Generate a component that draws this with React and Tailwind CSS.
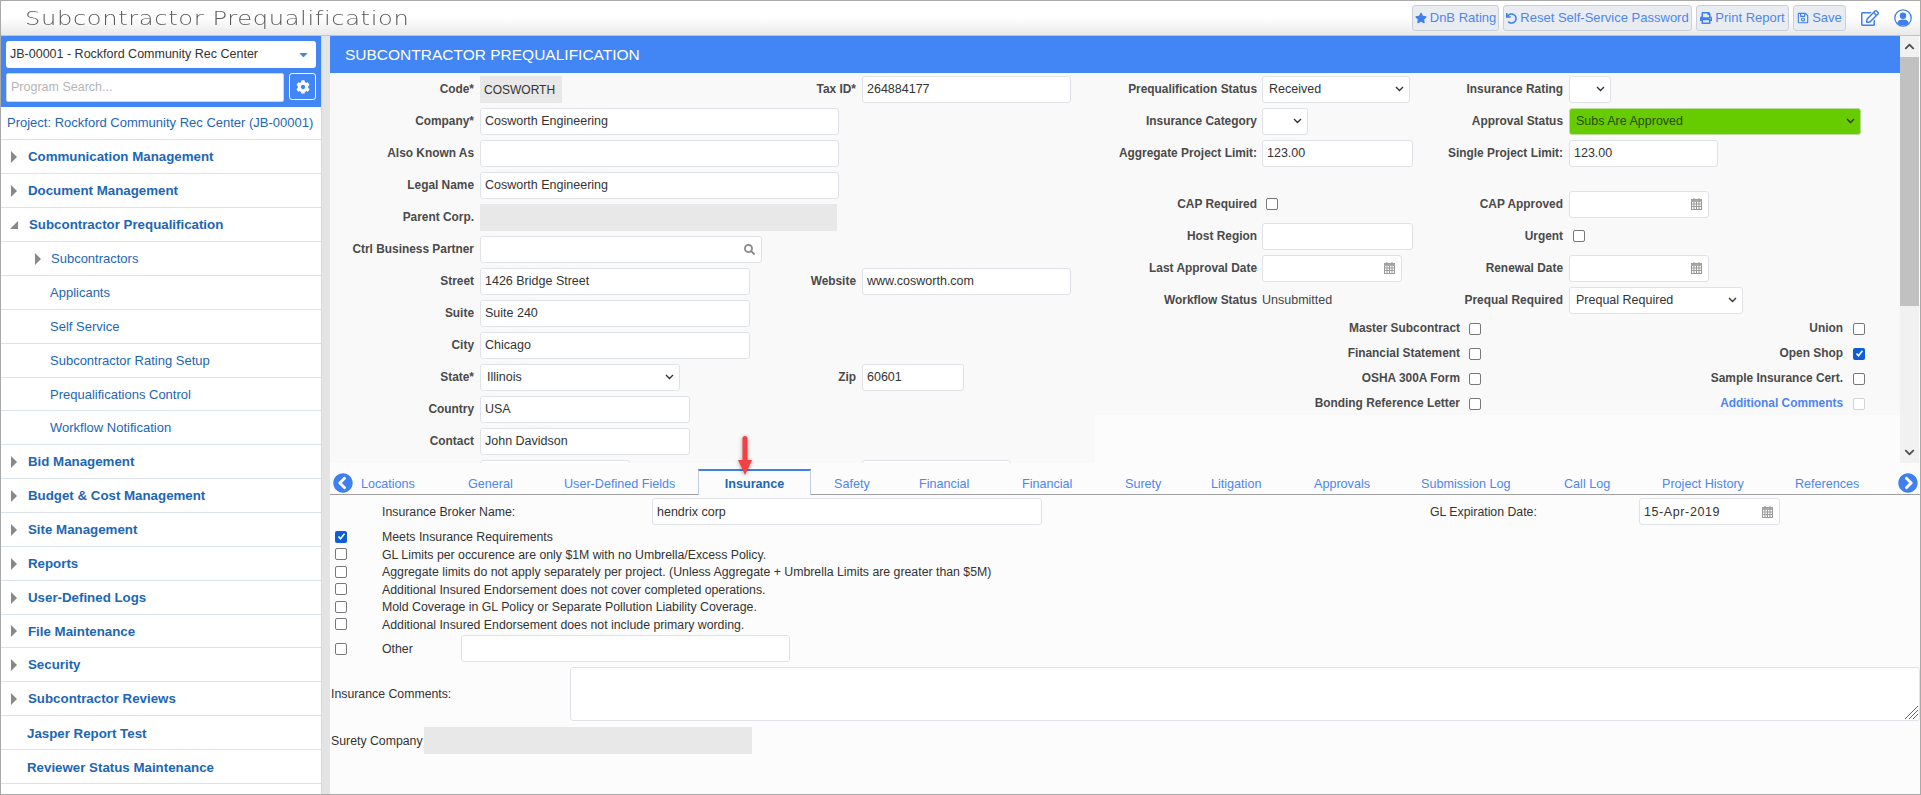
import React from "react";
import {
  FaStar, FaUndo, FaPrint, FaRegSave, FaRegEdit, FaCog, FaSearch,
  FaChevronCircleLeft, FaChevronCircleRight, FaChevronUp, FaChevronDown, FaCaretDown,
} from "react-icons/fa";

const FONT = "font-['Liberation_Sans',Arial,sans-serif]";

const subItems = [
  { label: "Applicants" },
  { label: "Self Service" },
  { label: "Subcontractor Rating Setup" },
  { label: "Prequalifications Control", h: "h-[33px]" },
  { label: "Workflow Notification" },
];
const menuBottom = [
  { label: "Bid Management" },
  { label: "Budget & Cost Management" },
  { label: "Site Management" },
  { label: "Reports" },
  { label: "User-Defined Logs" },
  { label: "File Maintenance", h: "h-[33px]" },
  { label: "Security" },
  { label: "Subcontractor Reviews" },
];

const tabs = [
  ["Locations", "w-[107px]"], ["General", "w-[96px]"], ["User-Defined Fields", "w-[134px]"], ["Insurance", ""],
  ["Safety", "w-[85px] ml-[23px]"], ["Financial", "w-[103px]"], ["Financial", "w-[103px]"], ["Surety", "w-[86px]"],
  ["Litigation", "w-[103px]"], ["Approvals", "w-[107px]"], ["Submission Log", "w-[143px]"], ["Call Log", "w-[98px]"],
  ["Project History", "w-[133px]"], ["References", "w-[90px]"],
];

const checks = [
  ["Meets Insurance Requirements", true],
  ["GL Limits per occurence are only $1M with no Umbrella/Excess Policy.", false],
  ["Aggregate limits do not apply separately per project. (Unless Aggregate + Umbrella Limits are greater than $5M)", false],
  ["Additional Insured Endorsement does not cover completed operations.", false],
  ["Mold Coverage in GL Policy or Separate Pollution Liability Coverage.", false],
  ["Additional Insured Endorsement does not include primary wording.", false],
];

const RightTri = () => (
  <svg width="6" height="12" viewBox="0 0 6 12" className="shrink-0"><path d="M0 0 L6 6 L0 12 Z" fill="#888" /></svg>
);
const OpenTri = () => (
  <svg width="8" height="8" viewBox="0 0 8 8" className="shrink-0"><path d="M8 0 V8 H0 Z" fill="#888" /></svg>
);

const Calendar = () => (
  <svg width="11" height="12" viewBox="0 0 11 12" className="shrink-0">
    <rect x="0.5" y="1.5" width="10" height="10" fill="#fff" stroke="#999" />
    <rect x="0.5" y="1.5" width="10" height="2.5" fill="#aaa" />
    <path d="M3 0v3M8 0v3M0 6h11M0 8.500h11M3 4v7M5.500 4v7M8 4v7" stroke="#999" strokeWidth="1" fill="none" />
  </svg>
);

const UserIcon = () => (
  <svg width="18" height="18" viewBox="0 0 18 18" className="ml-[11px]">
    <circle cx="9" cy="9" r="8.200" fill="#fff" stroke="#3f7ff0" strokeWidth="1.300" />
    <circle cx="9" cy="6.800" r="3.300" fill="#3f7ff0" />
    <path d="M3.200 14.200 C3.600 11.600 6 10.600 9 10.600 C12 10.600 14.400 11.600 14.800 14.200 C13.400 15.700 11.400 16.400 9 16.400 C6.600 16.400 4.600 15.700 3.200 14.200 Z" fill="#3f7ff0" />
  </svg>
);

const Check = ({ on, faded }) =>
  on ? (
    <span className="w-3 h-3 rounded-[2px] bg-[#0b5ed7] flex items-center justify-center shrink-0">
      <svg width="9" height="9" viewBox="0 0 9 9"><path d="M1.500 4.500 L3.500 6.800 L7.500 1.800" stroke="#fff" strokeWidth="1.600" fill="none" /></svg>
    </span>
  ) : (
    <span className={`block w-3 h-3 rounded-[2px] border bg-white shrink-0 ${faded ? "border-[#d5d5d8]" : "border-[#77777c]"}`} />
  );

const Input = ({ w, value, icon, mono }) => (
  <div className={`${w} h-[27px] bg-white border border-[#dfe3e8] rounded-[3px] flex items-center pl-[4px] pr-[6px] text-[12.500px] text-[#333] shrink-0 justify-between ${mono ? "tracking-[0.6px]" : ""}`}>
    <span className="pt-[1px]">{value}</span>
    {icon}
  </div>
);

const Select = ({ w, value, green }) => (
  <div className={`${w} h-[27px] border rounded-[3px] flex items-center pl-[6px] pr-[5px] text-[12.500px] shrink-0 justify-between ${green ? "bg-[#66cc00] border-[#b9dd98] text-[#2a4a08]" : "bg-white border-[#dfe3e8] text-[#333]"}`}>
    <span className="pt-[1px]">{value}</span>
    <svg width="9" height="6" viewBox="0 0 9 6"><path d="M1 1 L4.500 4.500 L8 1" stroke="#333" strokeWidth="1.400" fill="none" /></svg>
  </div>
);

const Disabled = ({ w }) => <div className={`${w} h-[27px] bg-[#e8e8e8] shrink-0`} />;

const Label = ({ w, children }) => (
  <div className={`${w} pt-[1px] text-right font-bold text-[11.900px] text-[#4a4a4a] shrink-0 whitespace-nowrap`}>{children}</div>
);

const Row = ({ label, field, right, rightField }) => (
  <div className="flex items-center h-8">
    <Label w="w-[144px]">{label}</Label>
    <div className="ml-[6px] w-[376px] flex items-center justify-between shrink-0">
      {field}
      {right && <Label w="">{right}</Label>}
    </div>
    {rightField && <div className="ml-[6px]">{rightField}</div>}
  </div>
);

const RRow = ({ label, field, right, rightField }) => (
  <div className="flex items-center h-8">
    <Label w="w-[162px]">{label}</Label>
    <div className="ml-[5px] w-[301px] flex items-center justify-between shrink-0">
      {field}
      {right && <Label w="ml-auto">{right}</Label>}
    </div>
    {rightField && <div className="ml-[6px] flex items-center">{rightField}</div>}
  </div>
);

const CRow = ({ left, leftOn, right, rightOn, link }) => (
  <div className="flex items-center h-[25px]">
    <Label w="w-[365px]">{left}</Label>
    <div className="ml-[9px]"><Check on={leftOn} /></div>
    <div className={`w-[362px] pt-[1px] text-right font-bold text-[11.900px] shrink-0 ${link ? "text-[#4d86f0]" : "text-[#4a4a4a]"}`}>{right}</div>
    <div className="ml-[10px]"><Check on={rightOn} faded={link} /></div>
  </div>
);

const MenuRow = ({ children, indent = "pl-[10px]", bold = true, icon, h = "h-[34px]" }) => (
  <div className={`${h} border-b border-[#dde3ea] flex items-center ${indent} text-[#1d66b5] ${bold ? "font-bold text-[13.300px]" : "text-[13px]"}`}>
    {icon}
    <span className="pt-[1px]">{children}</span>
  </div>
);

const ToolButton = ({ w, icon, children }) => (
  <button className={`${w} h-[26px] bg-[#e9edf1] border border-[#c9d0d8] rounded-[3px] flex items-center justify-center gap-[3px]`}>
    {icon}
    {children}
  </button>
);

export default function App() {
  return (
    <div className={`${FONT} w-[1921px] h-[795px] overflow-hidden bg-[#fcfcfc] border-t border-b border-l border-r border-[#a9a9a9] flex flex-col`}>
      {/* top bar */}
      <header className="h-[35px] shrink-0 bg-gradient-to-b from-white via-white to-[#e9e9e9] border-b border-[#c4c4c4] flex items-center pl-[24px] pr-[8px]">
        <h1 className="font-['DejaVu_Sans',sans-serif] font-extralight text-[20px] tracking-[0.5px] text-[#5c5c5c] origin-left scale-x-[1.21]">Subcontractor Prequalification</h1>
        <div className="ml-auto flex items-center gap-[4px] text-[13px] text-[#4d86f0]">
          <ToolButton w="w-[87px]" icon={<FaStar size={12} className="text-[#3f7ff0]" />}>DnB Rating</ToolButton>
          <ToolButton w="w-[189px]" icon={<FaUndo size={11} className="text-[#3f7ff0]" />}>Reset Self-Service Password</ToolButton>
          <ToolButton w="w-[93px]" icon={<FaPrint size={12} className="text-[#3f7ff0]" />}>Print Report</ToolButton>
          <ToolButton w="w-[53px]" icon={<FaRegSave size={12} className="text-[#3f7ff0]" />}>Save</ToolButton>
          <FaRegEdit size={18} className="ml-[11px] text-[#3f7ff0]" />
          <UserIcon />
        </div>
      </header>

      <div className="flex flex-1 min-h-0">
        {/* sidebar */}
        <aside className="w-[320px] shrink-0 bg-white">
          <div className="h-[71px] bg-[#4285f4] px-[5px] pt-[5px]">
            <div className="h-[27px] bg-white rounded-[3px] w-[310px] flex items-center justify-between pl-[4px] pr-[6px] text-[12.500px] text-[#333]">
              <span>JB-00001 - Rockford Community Rec Center</span>
              <FaCaretDown size={13} className="text-[#4285f4]" />
            </div>
            <div className="flex items-start gap-[5px] mt-[5px] w-[310px]">
              <div className="w-[278px] h-[29px] bg-white rounded-[2px] border border-[#d5d5d5] flex items-center pl-[4px] text-[12.500px] text-[#b5b5b5]">Program Search...</div>
              <div className="w-[27px] h-[27px] bg-[#4285f4] border border-white rounded-[3px] flex items-center justify-center"><FaCog size={14} className="text-white" /></div>
            </div>
          </div>
          <div className="h-[33px] border-b border-[#dde3ea] flex items-center pl-[6px] text-[13px] text-[#1d66b5] whitespace-nowrap">Project: Rockford Community Rec Center (JB-00001)</div>
          <MenuRow icon={<span className="mr-[11px]"><RightTri /></span>}>Communication Management</MenuRow>
          <MenuRow icon={<span className="mr-[11px]"><RightTri /></span>}>Document Management</MenuRow>
          <MenuRow icon={<span className="mr-[11px] ml-[-1px]"><OpenTri /></span>}>Subcontractor Prequalification</MenuRow>
          <MenuRow bold={false} indent="pl-[34px]" icon={<span className="mr-[10px]"><RightTri /></span>}>Subcontractors</MenuRow>
          {subItems.map((s) => (
            <MenuRow key={s.label} bold={false} indent="pl-[49px]" h={s.h}>{s.label}</MenuRow>
          ))}
          {menuBottom.map((m) => (
            <MenuRow key={m.label} h={m.h} icon={<span className="mr-[11px]"><RightTri /></span>}>{m.label}</MenuRow>
          ))}
          <MenuRow indent="pl-[26px] pt-[2px]">Jasper Report Test</MenuRow>
          <MenuRow indent="pl-[26px] pt-[2px]">Reviewer Status Maintenance</MenuRow>
        </aside>
        <div className="w-[9px] shrink-0 bg-[#e4e4e4] border-l border-[#d8d8d8]" />

        {/* main */}
        <main className="flex-1 min-w-0 flex flex-col">
          <div className="flex h-[427px] shrink-0">
            <div className="w-[1570px] shrink-0 flex flex-col">
              <div className="h-[37px] bg-[#4285f4] flex items-center pl-[15px] pt-[1px] text-[15.500px] text-white">SUBCONTRACTOR PREQUALIFICATION</div>
              <div className="flex flex-1 min-h-0 overflow-hidden">
                {/* left block of the form */}
                <div className="w-[765px] shrink-0 bg-[#f9f9f9]">
                  <Row label="Code*" field={<div className="w-[82px] h-[27px] bg-[#e8e8e8] flex items-center pl-[4px] pt-[1px] text-[12px] text-[#333] shrink-0">COSWORTH</div>} right="Tax ID*" rightField={<Input w="w-[209px]" value="264884177" />} />
                  <Row label="Company*" field={<Input w="w-[359px]" value="Cosworth Engineering" />} />
                  <Row label="Also Known As" field={<Input w="w-[359px]" />} />
                  <Row label="Legal Name" field={<Input w="w-[359px]" value="Cosworth Engineering" />} />
                  <Row label="Parent Corp." field={<Disabled w="w-[357px]" />} />
                  <Row label="Ctrl Business Partner" field={<Input w="w-[282px]" icon={<FaSearch size={11} className="text-[#888]" />} />} />
                  <Row label="Street" field={<Input w="w-[270px]" value="1426 Bridge Street" />} right="Website" rightField={<Input w="w-[209px]" value="www.cosworth.com" />} />
                  <Row label="Suite" field={<Input w="w-[270px]" value="Suite 240" />} />
                  <Row label="City" field={<Input w="w-[270px]" value="Chicago" />} />
                  <Row label="State*" field={<Select w="w-[200px]" value="Illinois" />} right="Zip" rightField={<Input w="w-[102px]" value="60601" />} />
                  <Row label="Country" field={<Input w="w-[210px]" value="USA" />} />
                  <Row label="Contact" field={<Input w="w-[210px]" value="John Davidson" />} />
                  <Row label="" field={<Input w="w-[150px]" />} right=" " rightField={<Input w="w-[149px]" />} />
                </div>
                {/* right block of the form */}
                <div className="w-[805px] h-[342px] shrink-0 bg-[#f9f9f9]">
                  <RRow label="Prequalification Status" field={<Select w="w-[148px]" value="Received" />} right="Insurance Rating" rightField={<Select w="w-[42px]" />} />
                  <RRow label="Insurance Category" field={<Select w="w-[46px]" />} right="Approval Status" rightField={<Select w="w-[292px]" value="Subs Are Approved" green />} />
                  <RRow label="Aggregate Project Limit:" field={<Input w="w-[151px]" value="123.00" />} right="Single Project Limit:" rightField={<Input w="w-[149px]" value="123.00" />} />
                  <div className="h-[19px]" />
                  <RRow label="CAP Required" field={<span className="ml-[4px]"><Check /></span>} right="CAP Approved" rightField={<Input w="w-[140px]" icon={<Calendar />} />} />
                  <RRow label="Host Region" field={<Input w="w-[151px]" />} right="Urgent" rightField={<span className="ml-[4px]"><Check /></span>} />
                  <RRow label="Last Approval Date" field={<Input w="w-[140px]" icon={<Calendar />} />} right="Renewal Date" rightField={<Input w="w-[140px]" icon={<Calendar />} />} />
                  <RRow label="Workflow Status" field={<span className="pt-[1px] text-[12.500px] text-[#444]">Unsubmitted</span>} right="Prequal Required" rightField={<Select w="w-[174px]" value="Prequal Required" />} />
                  <CRow left="Master Subcontract" right="Union" />
                  <CRow left="Financial Statement" right="Open Shop" rightOn />
                  <CRow left="OSHA 300A Form" right="Sample Insurance Cert." />
                  <CRow left="Bonding Reference Letter" right="Additional Comments" link />
                </div>
              </div>
            </div>
            {/* vertical scrollbar */}
            <div className="w-[19px] shrink-0 flex flex-col bg-[#f1f1f1]">
              <div className="h-[21px] flex items-center justify-center"><FaChevronUp size={11} className="text-[#505050]" /></div>
              <div className="h-[249px] bg-[#c1c1c1]" />
              <div className="flex-1 flex items-end justify-center pb-[5px]"><FaChevronDown size={11} className="text-[#505050]" /></div>
            </div>
          </div>

          {/* tabs */}
          <div className="relative h-[32px] shrink-0 border-b border-[#a0a0a0] flex items-end pl-[3px] pr-[2px] text-[12.600px] text-[#4d86f0]">
            <FaChevronCircleLeft size={20} className="text-[#3f7ff0] shrink-0 mb-[1px]" />
            <div className="flex items-end flex-1 pl-[8px]">
              {tabs.map(([t, w], i) =>
                t === "Insurance" ? (
                  <div key={i} className="w-[113px] h-[26px] mb-[-1px] pt-[3px] border-t-2 border-t-[#3f7ff0] border-x border-x-[#c2cede] bg-[#fcfcfc] flex items-center justify-center font-bold text-[#1d66b5] shrink-0">Insurance</div>
                ) : (
                  <div key={i} className={`${w} h-[22px] pt-[3px] flex items-center shrink-0`}>{t}</div>
                )
              )}
            </div>
            <FaChevronCircleRight size={20} className="text-[#3f7ff0] shrink-0 mb-[1px]" />
            {/* red pointer from the original annotation */}
            <svg width="16" height="39" viewBox="0 0 16 39" className="absolute left-[407px] top-[-27px] drop-shadow-[0_1px_2px_rgba(0,0,0,0.35)]">
              <path d="M8 2.500 V26" stroke="#f44043" strokeWidth="5" strokeLinecap="round" />
              <path d="M1 24 H15 L8 39 Z" fill="#f44043" />
            </svg>
          </div>

          {/* insurance tab content */}
          <div className="flex-1 min-h-0 text-[12.300px] text-[#333] flex flex-col">
            <div className="flex items-center h-[27px] mt-[3px]">
              <span className="ml-[52px] w-[270px] pt-[1px] shrink-0">Insurance Broker Name:</span>
              <Input w="w-[390px]" value="hendrix corp" />
              <span className="ml-[388px] w-[209px] pt-[1px] shrink-0">GL Expiration Date:</span>
              <Input w="w-[141px]" value="15-Apr-2019" mono icon={<Calendar />} />
            </div>
            <div className="mt-[3px] pl-[5px]">
              {checks.map(([t, on]) => (
                <div key={t} className="h-[17.500px] flex items-center">
                  <Check on={on} />
                  <span className="ml-[35px] pt-[1px] whitespace-nowrap">{t}</span>
                </div>
              ))}
            </div>
            <div className="flex items-center h-[27px] mt-[2px] pl-[5px]">
              <Check />
              <span className="ml-[35px] w-[79px] pt-[1px] shrink-0">Other</span>
              <Input w="w-[329px]" />
            </div>
            <div className="flex items-center h-[54px] mt-[5px]">
              <span className="ml-[1px] w-[239px] pt-[1px] shrink-0">Insurance Comments:</span>
              <div className="relative flex-1 h-full bg-white border border-[#dfe3e8] rounded-[3px]">
                <svg width="14" height="14" viewBox="0 0 14 14" className="absolute right-[1px] bottom-[1px]">
                  <path d="M1 14 L14 1 M5 14 L14 5 M9 14 L14 9" stroke="#666" strokeWidth="1" />
                </svg>
              </div>
            </div>
            <div className="flex items-center h-[27px] mt-[6px]">
              <span className="ml-[1px] w-[93px] pt-[1px] shrink-0">Surety Company</span>
              <Disabled w="w-[328px]" />
            </div>
          </div>
        </main>
      </div>
    </div>
  );
}
